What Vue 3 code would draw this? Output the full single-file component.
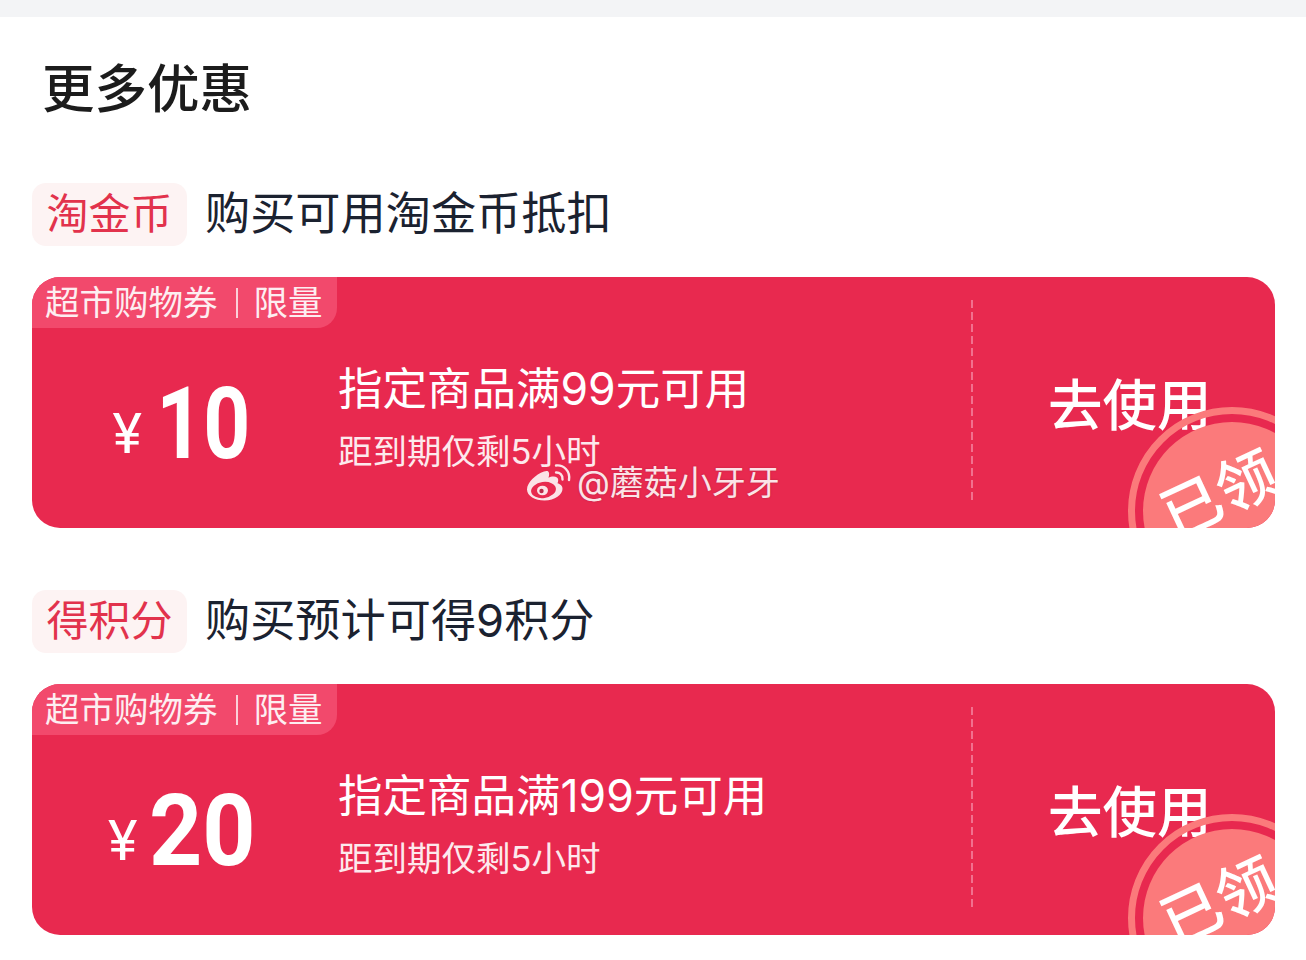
<script setup>
const sections = [
  { tag: '淘金币', desc: '购买可用淘金币抵扣', amount: '10', title: '指定商品满99元可用' },
  { tag: '得积分', desc: '购买预计可得9积分', amount: '20', title: '指定商品满199元可用' }
]
</script>

<template>
  <div class="page">
    <div class="band"></div>
    <main class="content">
      <h1 class="heading">更多优惠</h1>
      <section v-for="s in sections" :key="s.tag" class="section">
        <div class="info">
          <span class="tag">{{ s.tag }}</span>
          <span class="desc">{{ s.desc }}</span>
        </div>
        <div class="card">
          <div class="label">
            <span>超市购物券</span><i class="bar"></i><span>限量</span>
          </div>
          <div class="price">
            <span class="yen">¥</span>
            <span class="amount" :class="{ narrow: s.amount === '10' }">{{ s.amount }}</span>
          </div>
          <div class="text">
            <div class="title">{{ s.title }}</div>
            <div class="sub">距到期仅剩5小时</div>
          </div>
          <div class="action"><span class="use">去使用</span></div>
          <div class="stamp"><span class="stamp-text">已领</span></div>
        </div>
      </section>
    </main>
    <div class="watermark">
      <svg class="weibo" width="46" height="38" viewBox="0 0 46 38">
        <path d="M18 8.500C9.500 11.500 1 19.500 1 26.500 1 33 9 37.500 18.500 37.500 29 37.500 36.500 31.500 36.500 25.800 36.500 22.500 33.800 21 31.500 20.300 32.600 17.600 32.500 15.500 31 14.400 28.500 12.800 24.500 13.800 22.500 14.700 23.500 11.500 23.300 9.300 22 8.300 21 7.600 19.500 7.900 18 8.500Z" fill="#fbe3e7"/>
        <ellipse cx="17.500" cy="27" rx="12.500" ry="8" fill="#e8294f" transform="rotate(-8 17.500 27)"/>
        <ellipse cx="16.500" cy="27.500" rx="5.500" ry="4.800" fill="#fbe3e7"/>
        <circle cx="15.500" cy="28" r="2.200" fill="#b92b4a"/>
        <path d="M30 9.500C33.500 9.200 37 12 36.500 16.500M30 2.500C37.500 1.500 44.500 8 43 17" fill="none" stroke="#fbe3e7" stroke-width="2.400" stroke-linecap="round"/>
      </svg>
      <span class="wm-text">@蘑菇小牙牙</span>
    </div>
  </div>
</template>

<style scoped>
.page {
  position: relative;
  width: 1306px;
  height: 960px;
  overflow: hidden;
  background: #fff;
  font-family: Inter, "Noto Sans CJK SC", sans-serif;
}
.band {
  height: 17px;
  background: #f3f4f6;
}
.content {
  padding: 0 31px 0 32px;
}
.heading {
  margin: 0;
  padding: 39px 0 0 10px;
  height: 128px;
  box-sizing: border-box;
  font-size: 52.500px;
  line-height: 66px;
  font-weight: 500;
  color: #1c1c1c;
}
.section {
  margin-bottom: 62.500px;
}
.section:first-of-type {
  margin-top: 38px;
}
.info {
  display: flex;
  align-items: center;
  height: 63px;
  margin-bottom: 31px;
}
.tag {
  width: 155px;
  height: 63px;
  border-radius: 14px;
  background: #fdf3f3;
  color: #e2324c;
  font-size: 42px;
  line-height: 62px;
  text-align: center;
}
.desc {
  margin-left: 18px;
  margin-top: -1px;
  font-size: 45.200px;
  line-height: 62px;
  color: #1b2230;
}
.card {
  position: relative;
  display: flex;
  height: 250.500px;
  border-radius: 28px;
  overflow: hidden;
  background: #e8294f;
  color: #fff;
}
.label {
  position: absolute;
  left: 0;
  top: 0;
  display: flex;
  align-items: center;
  height: 51px;
  padding: 0 14px 6px 13px;
  box-sizing: border-box;
  border-radius: 0 0 20px 0;
  background: #f2496c;
  color: #fdeef1;
  font-size: 34.500px;
}
.bar {
  width: 2px;
  height: 30px;
  margin: 6px 16px 0 18px;
  background: #fbd0d9;
}
.price {
  display: flex;
  align-items: baseline;
  justify-content: center;
  width: 298px;
  padding-top: 107px;
  box-sizing: border-box;
}
.yen {
  font-family: Roboto, sans-serif;
  font-weight: 400;
  font-size: 56px;
  line-height: 62px;
  margin-right: 14px;
  transform: translateY(-5px);
}
.amount {
  display: inline-block;
  font-family: Roboto, "Liberation Sans", sans-serif;
  font-weight: 700;
  font-size: 100px;
  line-height: 80px;
  transform: scaleX(0.93);
  margin: 0 -6px;
}
.amount.narrow {
  transform: scaleX(0.82);
  margin: 0 -11px 0 -10px;
}
.text {
  width: 633px;
  margin-left: 8px;
  padding-top: 82px;
  box-sizing: border-box;
}
.title {
  font-size: 44.500px;
  line-height: 60px;
}
.sub {
  margin-top: 5px;
  font-size: 34.500px;
  line-height: 56px;
  color: #fde9ed;
}
.action {
  position: relative;
  flex: 1;
  padding: 94px 0 0 77px;
  box-sizing: border-box;
}
.action::before {
  content: "";
  position: absolute;
  left: 0;
  top: 23px;
  width: 2px;
  height: 200px;
  background: repeating-linear-gradient(to bottom, #f2708e 0 8px, transparent 8px 12px);
}
.use {
  font-size: 54.500px;
  line-height: 68px;
  font-weight: 500;
}
.stamp {
  position: absolute;
  left: 1096px;
  top: 130px;
  width: 208px;
  height: 208px;
  box-sizing: border-box;
  border: 7px solid #fb7a7b;
  border-radius: 50%;
  background: #fb7a7b;
  background-clip: content-box;
  padding: 8px;
}
.stamp-text {
  position: absolute;
  left: 24px;
  top: 45px;
  font-size: 60px;
  line-height: 70px;
  font-weight: 500;
  color: #fff;
  white-space: nowrap;
  transform: rotate(-25deg);
}
.watermark {
  position: absolute;
  left: 526px;
  top: 461px;
  display: flex;
  align-items: center;
  gap: 5px;
  color: #fbe3e7;
}
.wm-text {
  margin-top: 2px;
  font-size: 34px;
  line-height: 40px;
  text-shadow: 0 0 2px rgba(90, 20, 40, 0.35);
}
</style>
